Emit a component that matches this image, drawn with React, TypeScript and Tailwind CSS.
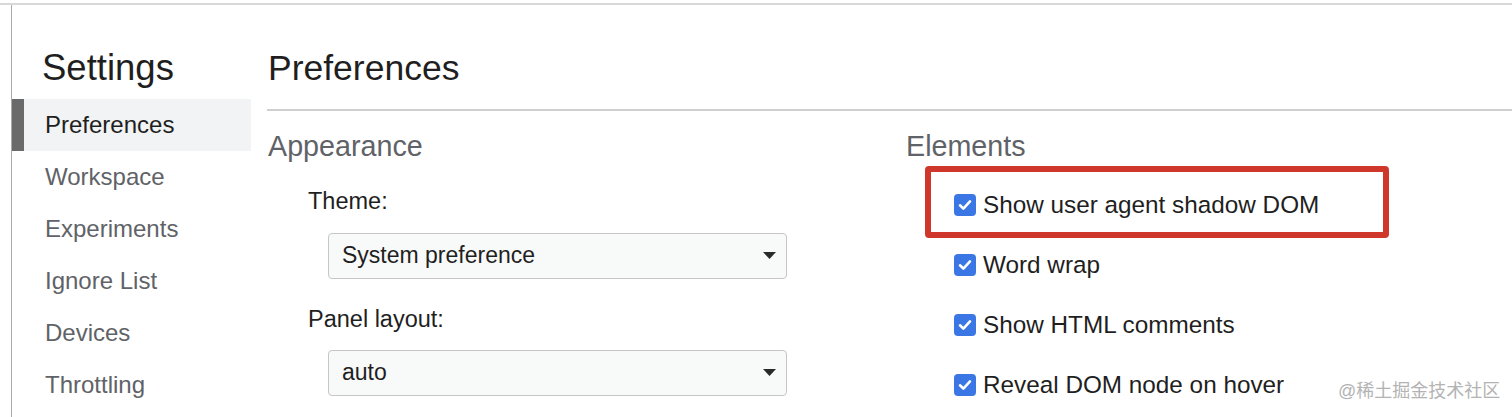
import React from "react";

const sidebarItems = ["Preferences", "Workspace", "Experiments", "Ignore List", "Devices", "Throttling"];
const checks = ["Show user agent shadow DOM", "Word wrap", "Show HTML comments", "Reveal DOM node on hover"];

function Checkbox() {
  return (
    <span className="flex h-[22px] w-[22px] shrink-0 items-center justify-center rounded-[4px] bg-[#3a76e4]">
      <svg width="16" height="16" viewBox="0 0 16 16" fill="none">
        <path d="M3 8.3 L6.4 11.6 L13 4.4" stroke="white" strokeWidth="2.6" strokeLinecap="round" strokeLinejoin="round" />
      </svg>
    </span>
  );
}

function Select({ value }: { value: string }) {
  return (
    <div className="flex h-[46px] w-[459px] items-center justify-between rounded-[4px] border-[1.5px] border-[#c6c6c6] bg-[#f8f9f9] pl-[13px] pr-[10px] text-[23px] text-[#1f1f1f]">
      <span>{value}</span>
      <svg width="13" height="7" viewBox="0 0 13 7">
        <path d="M0 0 H13 L6.5 7 Z" fill="#2a2a2a" />
      </svg>
    </div>
  );
}

export default function App() {
  return (
    <div
      className="relative h-[417px] w-[1512px] overflow-hidden bg-white pt-[3px]"
      style={{ fontFamily: '"Liberation Sans", Arial, "Noto Sans CJK SC", sans-serif' }}
    >
      <div className="h-[2px] w-full bg-[#d8d8d8]" />
      <div className="flex h-full pl-[11px]">
        <div className="flex h-full border-l-[1.5px] border-[#a9a9a9]">
          {/* Sidebar */}
          <div className="w-[239px] shrink-0 pt-[41px]">
            <div className="h-[44px] pl-[30px] text-[36.5px] leading-[44px] text-[#1f1f1f]">Settings</div>
            <div className="mt-[9px] flex flex-col">
              {sidebarItems.map((item, i) =>
                i === 0 ? (
                  <div key={item} className="flex h-[52px] bg-[#f1f3f4]">
                    <div className="w-[12px] bg-[#6a6a6a]" />
                    <span className="pl-[21px] text-[24px] leading-[52px] text-[#1f1f1f]">{item}</span>
                  </div>
                ) : (
                  <div key={item} className="h-[52px] pl-[33px] text-[24px] leading-[52px] text-[#5f6368]">
                    {item}
                  </div>
                )
              )}
            </div>
          </div>
          {/* Main */}
          <div className="ml-[16px] w-[1260px] pt-[41px]">
            <div className="h-[44px] pl-[1px] text-[35.5px] leading-[44px] text-[#1f1f1f]">Preferences</div>
            <div className="mt-[19px] h-[1.5px] w-full bg-[#cfcfcf]" />
            <div className="flex pt-[18px]">
              {/* Appearance */}
              <div className="w-[639px] shrink-0 pl-[1px]">
                <div className="h-[34px] text-[28.7px] leading-[34px] text-[#5f6368]">Appearance</div>
                <div className="pl-[40px]">
                  <div className="mt-[24px] h-[28px] text-[23.5px] leading-[28px] text-[#1f1f1f]">Theme:</div>
                  <div className="mt-[18px] pl-[20px]">
                    <Select value="System preference" />
                  </div>
                  <div className="mt-[26px] h-[28px] text-[23.5px] leading-[28px] text-[#1f1f1f]">Panel layout:</div>
                  <div className="mt-[17px] pl-[20px]">
                    <Select value="auto" />
                  </div>
                </div>
              </div>
              {/* Elements */}
              <div className="flex-1">
                <div className="h-[34px] text-[28.7px] leading-[34px] text-[#5f6368]">Elements</div>
                <div className="mt-[12px] flex flex-col">
                  {checks.map((c, i) => (
                    <div key={c} className="relative flex h-[60px] items-center gap-[7px] pl-[48px]">
                      {i === 0 && (
                        <div className="pointer-events-none absolute left-[19px] top-[-9px] h-[72px] w-[464px] rounded-[4px] border-[6px] border-[#d0372b]" />
                      )}
                      <Checkbox />
                      <span className="text-[24.3px] leading-[28px] text-[#1f1f1f]">{c}</span>
                    </div>
                  ))}
                </div>
              </div>
            </div>
          </div>
        </div>
      </div>
      <div className="absolute left-[1338px] top-[380px] text-[18px] leading-[22px] text-[#b3b3b3]">@稀土掘金技术社区</div>
    </div>
  );
}
